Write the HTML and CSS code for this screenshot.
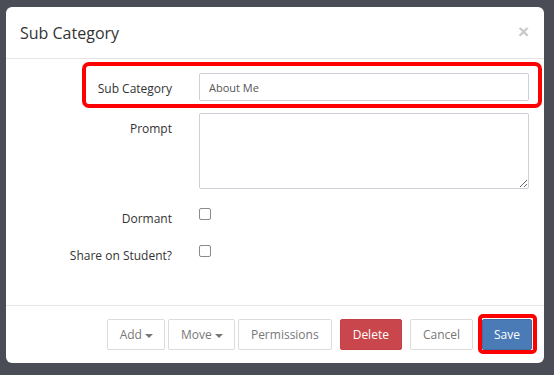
FILE: index.html
```html
<!DOCTYPE html>
<html lang="en">
<head>
    <meta charset="UTF-8">
    <meta name="viewport" content="width=device-width, initial-scale=1.0">
    <title>Sub Category</title>
    <link rel="stylesheet" href="styles.css">
</head>
<body>
    <div class="modal">
        <div class="modal-header">
            <h4 class="modal-title">Sub Category</h4>
            <button class="close" type="button">&times;</button>
        </div>

        <div class="modal-body">
            <div class="form-row highlight">
                <label for="subcat">Sub Category</label>
                <input type="text" id="subcat" class="form-input" value="About Me">
            </div>

            <div class="form-row prompt-row">
                <label for="prompt">Prompt</label>
                <textarea id="prompt" class="form-input"></textarea>
            </div>

            <div class="form-row check-row">
                <label for="dormant">Dormant</label>
                <div><input type="checkbox" id="dormant" class="check"></div>
            </div>

            <div class="form-row check-row last">
                <label for="share">Share on Student?</label>
                <div><input type="checkbox" id="share" class="check"></div>
            </div>
        </div>

        <div class="modal-footer">
            <button class="btn btn-default btn-add">Add <span class="caret"></span></button>
            <button class="btn btn-default btn-move">Move <span class="caret"></span></button>
            <button class="btn btn-default">Permissions</button>
            <button class="btn btn-danger">Delete</button>
            <button class="btn btn-default">Cancel</button>
            <button class="btn btn-primary btn-save">Save</button>
        </div>
    </div>
</body>
</html>
```

FILE: styles.css
```css
html, body {
    height: 100%;
}
body {
    margin: 0;
    padding: 7px 10px 0 6px;
    box-sizing: border-box;
    background-color: #4b4d56;
    font-family: "Open Sans", "Liberation Sans", sans-serif;
    color: #333;
}
.modal {
    width: 538px;
    background-color: #fff;
    border-radius: 6px;
}
.modal-header {
    display: flex;
    justify-content: space-between;
    align-items: center;
    padding: 13px 15px 12px 14px;
    border-bottom: 1px solid #e5e5e5;
}
.modal-title {
    margin: 0;
    font-size: 16px;
    font-weight: normal;
    line-height: 26px;
}
.close {
    padding: 0;
    border: none;
    background: none;
    font-family: "Liberation Sans", sans-serif;
    font-size: 19px;
    font-weight: bold;
    line-height: 1;
    color: #c9c9c9;
    cursor: pointer;
    margin-top: -3px;
}
.modal-body {
    padding: 14px 15px 38px 15px;
}
.form-row {
    display: grid;
    grid-template-columns: 151px 330px;
    column-gap: 27px;
    margin-bottom: 12px;
}
.form-row label {
    text-align: right;
    font-size: 12px;
    line-height: 20px;
    padding-top: 6px;
    color: #333;
}
.form-input {
    box-sizing: border-box;
    width: 100%;
    height: 28px;
    margin: 0;
    padding: 0 9px;
    border: 1px solid #ccd1d7;
    border-radius: 2px;
    font-family: "Open Sans", "Liberation Sans", sans-serif;
    font-size: 11px;
    color: #555;
}
.highlight {
    position: relative;
}
.highlight::after {
    content: "";
    position: absolute;
    top: -11px;
    bottom: -7px;
    left: 61px;
    right: -13px;
    border: 4px solid #f00;
    border-radius: 7px;
    pointer-events: none;
}
.prompt-row {
    margin-bottom: 14px;
}
.prompt-row textarea {
    height: 76px;
    padding: 6px 9px;
    resize: vertical;
}
.check-row {
    height: 27px;
    margin-bottom: 10px;
}
.check-row.last {
    margin-bottom: 0;
}
.check {
    appearance: none;
    -webkit-appearance: none;
    width: 12px;
    height: 12px;
    margin: 2px 0 0 0;
    border: 1px solid #8a8a8a;
    border-radius: 2px;
    background: #fff;
}
.modal-footer {
    display: flex;
    justify-content: flex-end;
    padding: 13px 12px 13px 15px;
    border-top: 1px solid #e5e5e5;
}
.btn {
    height: 31px;
    padding: 0 12px;
    margin-left: 8px;
    border: 1px solid #dcdcdc;
    border-radius: 2px;
    font-family: "Open Sans", "Liberation Sans", sans-serif;
    font-size: 12px;
    cursor: pointer;
}
.btn-default {
    background-color: #fff;
    color: #777;
}
.btn-move {
    margin-left: 3px;
}
.btn-move + .btn {
    margin-left: 3px;
}
.btn-add, .btn-move {
    padding-right: 11px;
}
.caret {
    display: inline-block;
    width: 0;
    height: 0;
    margin-left: 0;
    vertical-align: middle;
    border-top: 4px solid #777;
    border-left: 4px solid transparent;
    border-right: 4px solid transparent;
}
.btn-danger {
    background-color: #c9474c;
    border-color: #c34146;
    color: #fff;
}
.btn-primary {
    background-color: #4a7bb7;
    border-color: #3f6ca3;
    color: #fff;
}
.btn-save {
    position: relative;
    margin-left: 9px;
    padding: 0 11px;
}
.btn-save::after {
    content: "";
    position: absolute;
    top: -6px;
    bottom: -5px;
    left: -5px;
    right: -6px;
    border: 4px solid #f00;
    border-radius: 5px;
    pointer-events: none;
}
```
